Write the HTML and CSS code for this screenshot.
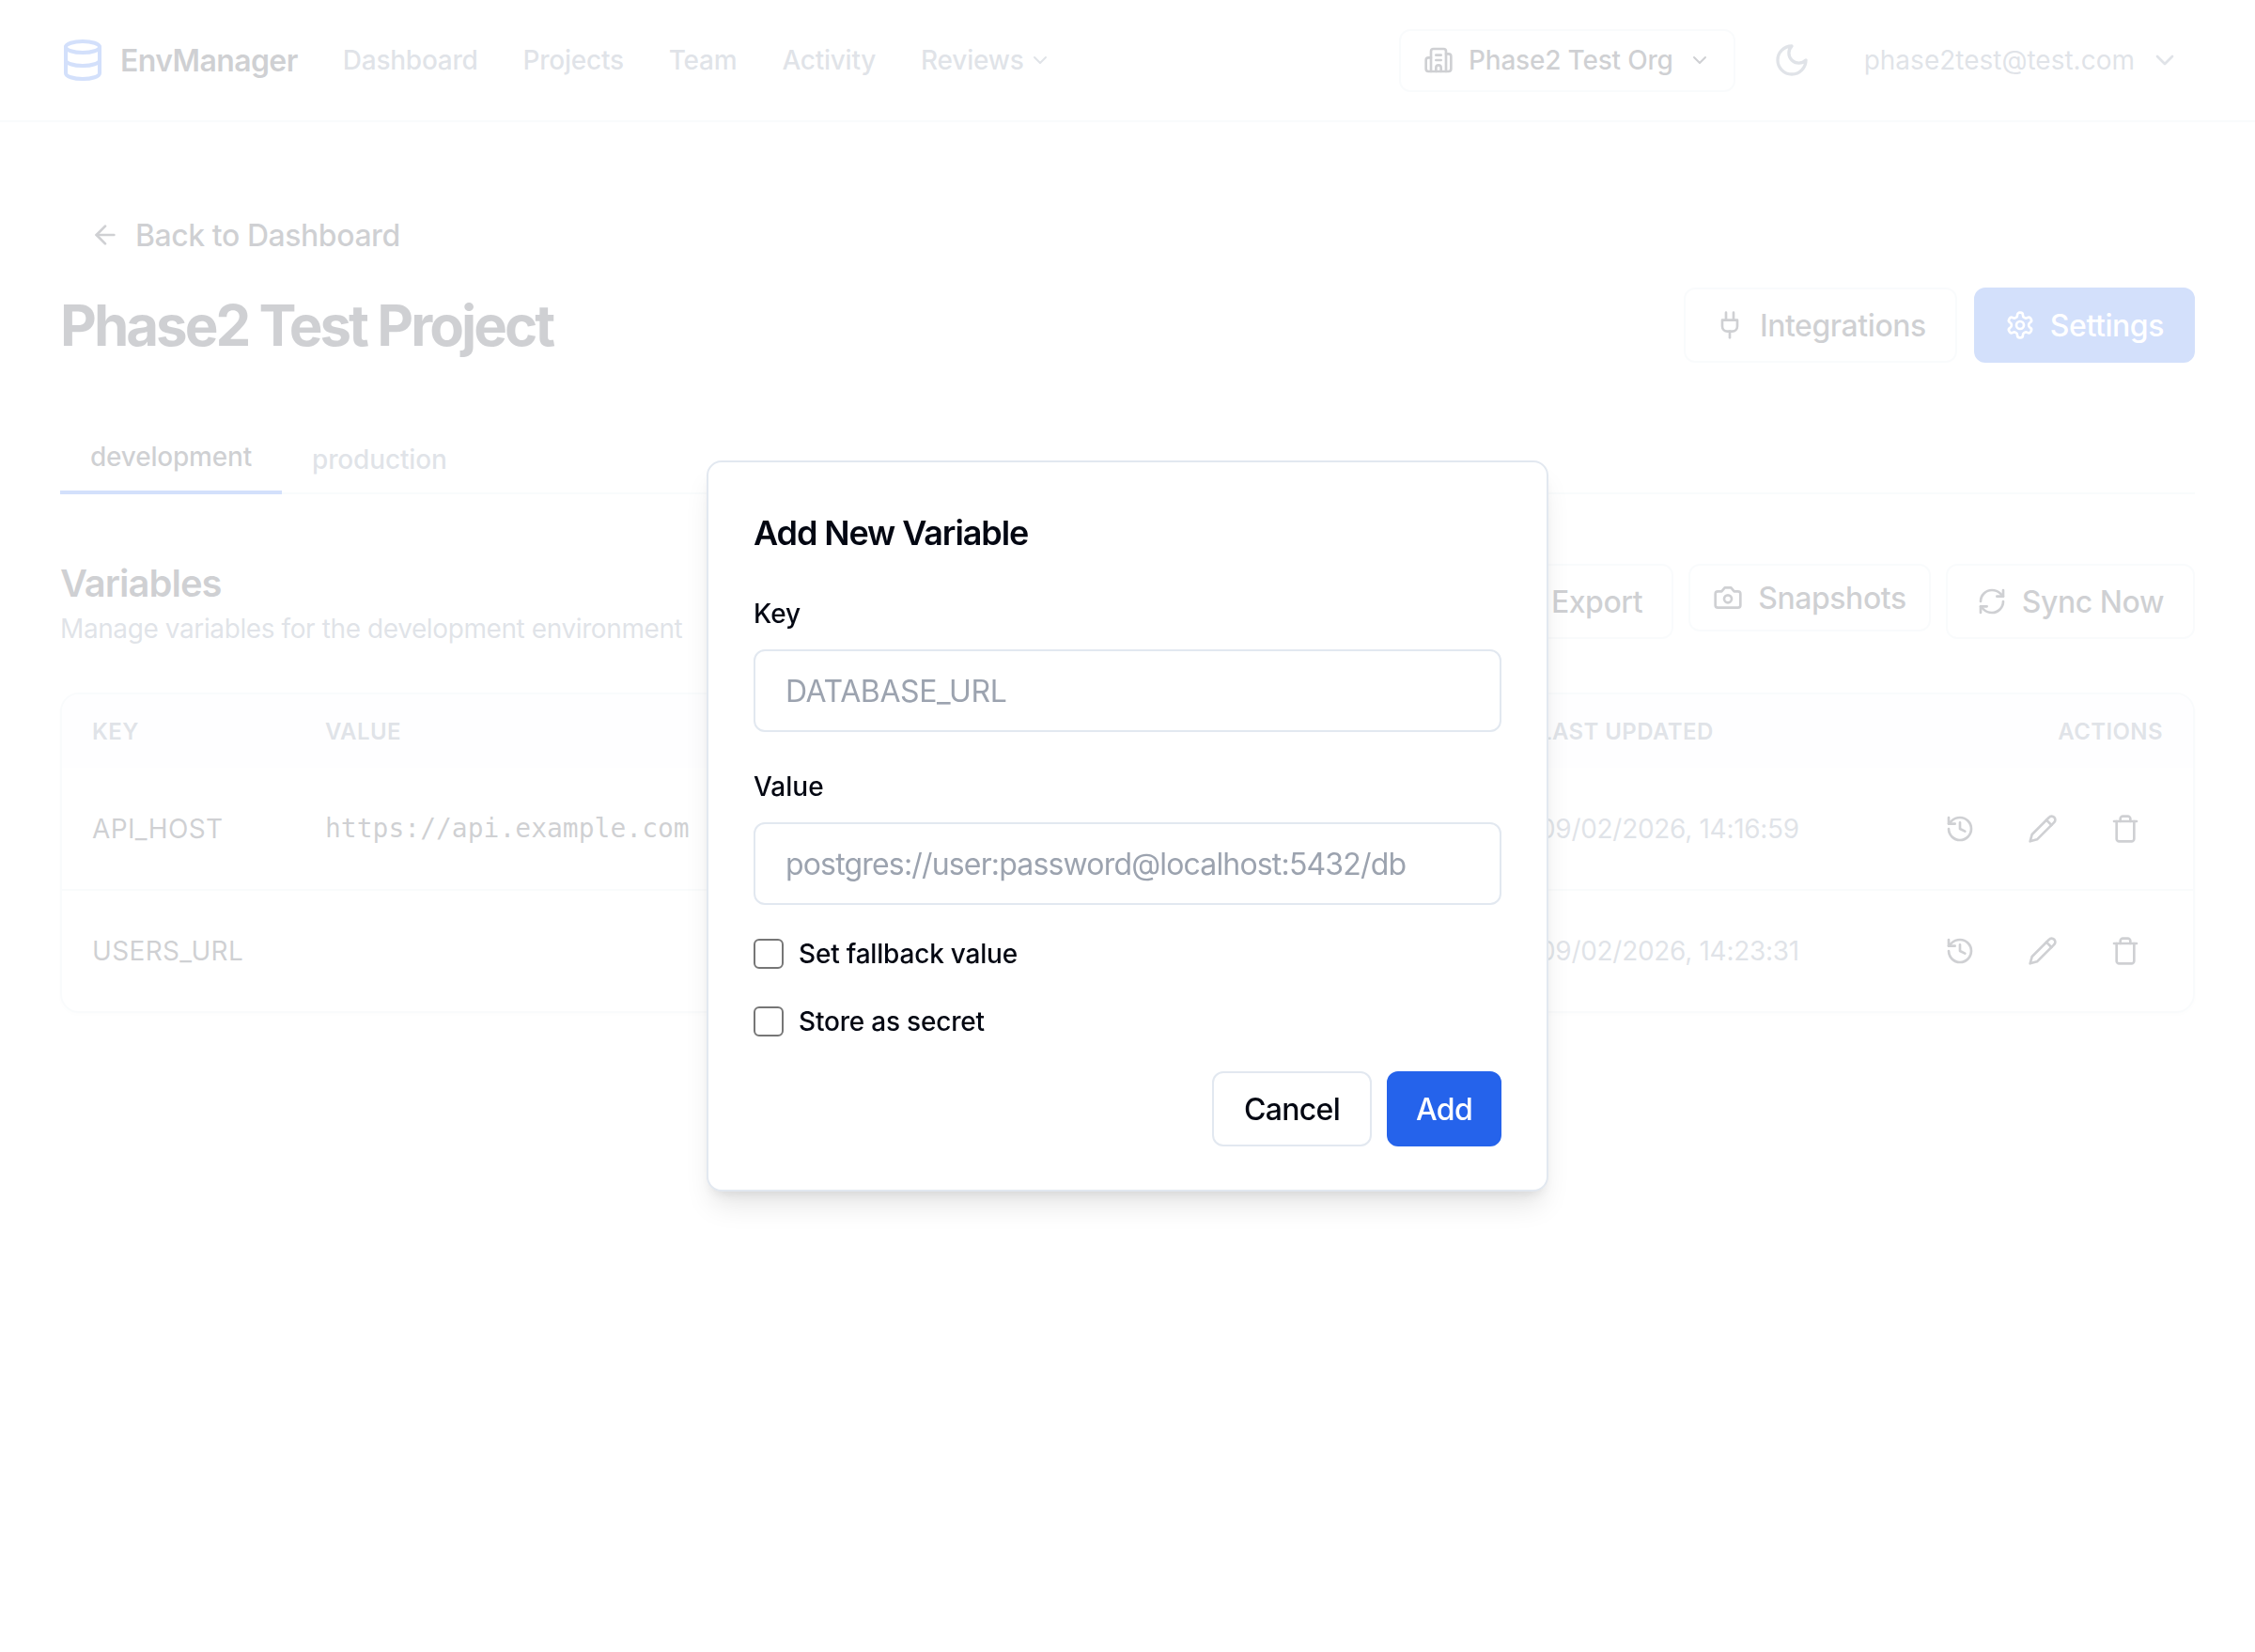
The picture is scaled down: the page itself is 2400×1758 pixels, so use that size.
FILE: index.html
```html
<!DOCTYPE html>
<html lang="en">
<head>
    <meta charset="UTF-8">
    <title>Phase2 Test Project - EnvManager</title>
    <link rel="stylesheet" href="styles.css">
</head>
<body>
    <svg class="sprite" xmlns="http://www.w3.org/2000/svg">
        <symbol id="i-database" viewBox="0 0 24 24"><ellipse cx="12" cy="5" rx="9" ry="3"/><path d="M3 5V19A9 3 0 0 0 21 19V5"/><path d="M3 12A9 3 0 0 0 21 12"/></symbol>
        <symbol id="i-chevron" viewBox="0 0 24 24"><path d="m6 9 6 6 6-6"/></symbol>
        <symbol id="i-building" viewBox="0 0 24 24"><path d="M10 12h4"/><path d="M10 8h4"/><path d="M14 21v-3a2 2 0 0 0-4 0v3"/><path d="M6 10H4a2 2 0 0 0-2 2v7a2 2 0 0 0 2 2h16a2 2 0 0 0 2-2V9a2 2 0 0 0-2-2h-2"/><path d="M6 21V5a2 2 0 0 1 2-2h8a2 2 0 0 1 2 2v16"/></symbol>
        <symbol id="i-moon" viewBox="0 0 24 24"><path d="M12 3a6 6 0 0 0 9 9 9 9 0 1 1-9-9Z"/></symbol>
        <symbol id="i-arrow-left" viewBox="0 0 24 24"><path d="m12 19-7-7 7-7"/><path d="M19 12H5"/></symbol>
        <symbol id="i-plug" viewBox="0 0 24 24"><path d="M12 22v-5"/><path d="M9 8V2"/><path d="M15 8V2"/><path d="M18 8v5a4 4 0 0 1-4 4h-4a4 4 0 0 1-4-4V8Z"/></symbol>
        <symbol id="i-settings" viewBox="0 0 24 24"><path d="M12.22 2h-.44a2 2 0 0 0-2 2v.18a2 2 0 0 1-1 1.73l-.43.25a2 2 0 0 1-2 0l-.15-.08a2 2 0 0 0-2.73.73l-.22.38a2 2 0 0 0 .73 2.73l.15.1a2 2 0 0 1 1 1.72v.51a2 2 0 0 1-1 1.74l-.15.09a2 2 0 0 0-.73 2.73l.22.38a2 2 0 0 0 2.73.73l.15-.08a2 2 0 0 1 2 0l.43.25a2 2 0 0 1 1 1.73V20a2 2 0 0 0 2 2h.44a2 2 0 0 0 2-2v-.18a2 2 0 0 1 1-1.73l.43-.25a2 2 0 0 1 2 0l.15.08a2 2 0 0 0 2.73-.73l.22-.39a2 2 0 0 0-.73-2.73l-.15-.08a2 2 0 0 1-1-1.74v-.5a2 2 0 0 1 1-1.74l.15-.09a2 2 0 0 0 .73-2.73l-.22-.38a2 2 0 0 0-2.73-.73l-.15.08a2 2 0 0 1-2 0l-.43-.25a2 2 0 0 1-1-1.73V4a2 2 0 0 0-2-2z"/><circle cx="12" cy="12" r="3"/></symbol>
        <symbol id="i-download" viewBox="0 0 24 24"><path d="M21 15v4a2 2 0 0 1-2 2H5a2 2 0 0 1-2-2v-4"/><path d="m7 10 5 5 5-5"/><path d="M12 15V3"/></symbol>
        <symbol id="i-camera" viewBox="0 0 24 24"><path d="M14.5 4h-5L7 7H4a2 2 0 0 0-2 2v9a2 2 0 0 0 2 2h16a2 2 0 0 0 2-2V9a2 2 0 0 0-2-2h-3l-2.5-3z"/><circle cx="12" cy="13" r="3"/></symbol>
        <symbol id="i-refresh" viewBox="0 0 24 24"><path d="M3 12a9 9 0 0 1 9-9 9.75 9.75 0 0 1 6.74 2.74L21 8"/><path d="M21 3v5h-5"/><path d="M21 12a9 9 0 0 1-9 9 9.75 9.75 0 0 1-6.74-2.74L3 16"/><path d="M8 16H3v5"/></symbol>
        <symbol id="i-history" viewBox="0 0 24 24"><path d="M3 12a9 9 0 1 0 9-9 9.75 9.75 0 0 0-6.74 2.74L3 8"/><path d="M3 3v5h5"/><path d="M12 7v5l4 2"/></symbol>
        <symbol id="i-pencil" viewBox="0 0 24 24"><path d="M17 3a2.85 2.83 0 1 1 4 4L7.5 20.5 2 22l1.5-5.5Z"/><path d="m15 5 4 4"/></symbol>
        <symbol id="i-trash" viewBox="0 0 24 24"><path d="M3 6h18"/><path d="M19 6v14c0 1-1 2-2 2H7c-1 0-2-1-2-2V6"/><path d="M8 6V4c0-1 1-2 2-2h4c1 0 2 1 2 2v2"/></symbol>
    </svg>

    <header class="header">
        <div class="header-left">
            <a class="logo" href="#">
                <svg class="icon icon-48 logo-icon"><use href="#i-database"/></svg>
                <span>EnvManager</span>
            </a>
            <nav class="nav-list">
                <a href="#">Dashboard</a>
                <a href="#">Projects</a>
                <a href="#">Team</a>
                <a href="#">Activity</a>
                <a class="nav-menu" href="#">Reviews <svg class="icon icon-24"><use href="#i-chevron"/></svg></a>
            </nav>
        </div>
        <div class="header-right">
            <button class="org-button">
                <svg class="icon icon-32"><use href="#i-building"/></svg>
                <span>Phase2 Test Org</span>
                <svg class="icon icon-24"><use href="#i-chevron"/></svg>
            </button>
            <button class="theme-button"><svg class="icon icon-40"><use href="#i-moon"/></svg></button>
            <button class="user-button">
                <span>phase2test@test.com</span>
                <svg class="icon icon-32"><use href="#i-chevron"/></svg>
            </button>
        </div>
    </header>

    <main class="main">
        <a class="back-link" href="#">
            <svg class="icon icon-32"><use href="#i-arrow-left"/></svg>
            <span>Back to Dashboard</span>
        </a>

        <div class="title-row">
            <h1 class="page-title">Phase2 Test Project</h1>
            <div class="button-row button-row-wide">
                <button class="btn"><svg class="icon icon-32"><use href="#i-plug"/></svg>Integrations</button>
                <button class="btn btn-primary"><svg class="icon icon-32"><use href="#i-settings"/></svg>Settings</button>
            </div>
        </div>

        <div class="tabs">
            <button class="tab tab-active">development</button>
            <button class="tab">production</button>
        </div>

        <section class="variables">
            <div class="variables-head">
                <div>
                    <h2 class="section-title">Variables</h2>
                    <p class="section-sub">Manage variables for the development environment</p>
                </div>
                <div class="button-row button-row-top">
                    <button class="btn"><svg class="icon icon-32"><use href="#i-download"/></svg>Export</button>
                    <button class="btn btn-small"><svg class="icon icon-32"><use href="#i-camera"/></svg>Snapshots</button>
                    <button class="btn"><svg class="icon icon-32"><use href="#i-refresh"/></svg>Sync Now</button>
                </div>
            </div>

            <div class="card">
                <table class="var-table">
                    <colgroup>
                        <col class="col-key">
                        <col class="col-value">
                        <col class="col-updated">
                        <col>
                    </colgroup>
                    <thead>
                        <tr>
                            <th>Key</th>
                            <th>Value</th>
                            <th>Last Updated</th>
                            <th class="th-actions">Actions</th>
                        </tr>
                    </thead>
                    <tbody>
                        <tr>
                            <td class="cell-key">API_HOST</td>
                            <td class="cell-mono">https://api.example.com</td>
                            <td class="cell-date">09/02/2026, 14:16:59</td>
                            <td>
                                <div class="row-actions">
                                    <button class="icon-button"><svg class="icon icon-32"><use href="#i-history"/></svg></button>
                                    <button class="icon-button"><svg class="icon icon-32"><use href="#i-pencil"/></svg></button>
                                    <button class="icon-button"><svg class="icon icon-32"><use href="#i-trash"/></svg></button>
                                </div>
                            </td>
                        </tr>
                        <tr>
                            <td class="cell-key">USERS_URL</td>
                            <td class="cell-mono"></td>
                            <td class="cell-date">09/02/2026, 14:23:31</td>
                            <td>
                                <div class="row-actions">
                                    <button class="icon-button"><svg class="icon icon-32"><use href="#i-history"/></svg></button>
                                    <button class="icon-button"><svg class="icon icon-32"><use href="#i-pencil"/></svg></button>
                                    <button class="icon-button"><svg class="icon icon-32"><use href="#i-trash"/></svg></button>
                                </div>
                            </td>
                        </tr>
                    </tbody>
                </table>
            </div>
        </section>
    </main>

    <div class="overlay">
        <form class="modal">
            <h3 class="modal-title">Add New Variable</h3>
            <label class="field">
                <span class="field-label">Key</span>
                <input class="input input-key" type="text" placeholder="DATABASE_URL">
            </label>
            <label class="field field-last">
                <span class="field-label">Value</span>
                <input class="input input-value" type="text" placeholder="postgres://user:password@localhost:5432/db">
            </label>
            <label class="check">
                <input type="checkbox">
                <span>Set fallback value</span>
            </label>
            <label class="check">
                <input type="checkbox">
                <span>Store as secret</span>
            </label>
            <div class="modal-actions">
                <button class="modal-btn" type="button">Cancel</button>
                <button class="modal-btn modal-btn-primary" type="button">Add</button>
            </div>
        </form>
    </div>
</body>
</html>
```

FILE: styles.css
```css
* {
    margin: 0;
    padding: 0;
    box-sizing: border-box;
}

body {
    font-family: Inter, "Liberation Sans", sans-serif;
    background-color: #fff;
    color: #111827;
    height: 1758px;
    overflow: hidden;
}

a {
    color: inherit;
    text-decoration: none;
}

button {
    font-family: inherit;
    color: inherit;
    background: none;
    border: 0;
}

.sprite {
    display: none;
}

.icon {
    fill: none;
    stroke: currentColor;
    stroke-width: 2;
    stroke-linecap: round;
    stroke-linejoin: round;
    flex-shrink: 0;
}

.icon-24 { width: 24px; height: 24px; }
.icon-32 { width: 32px; height: 32px; }
.icon-40 { width: 40px; height: 40px; }
.icon-48 { width: 48px; height: 48px; }

/* header */
.header {
    height: 130px;
    padding: 0 64px;
    border-bottom: 2px solid #e2e8f0;
    display: flex;
    justify-content: space-between;
    align-items: center;
}

.header-left,
.header-right,
.nav-list,
.logo {
    display: flex;
    align-items: center;
}

.header-left,
.nav-list {
    gap: 48px;
}

.logo {
    gap: 16px;
    font-size: 32px;
    font-weight: 600;
    letter-spacing: -0.6px;
}

.logo-icon {
    color: #2563eb;
}

.nav-list a {
    font-size: 28px;
    font-weight: 500;
    letter-spacing: -0.25px;
    color: #64748b;
}

.nav-menu {
    display: flex;
    align-items: center;
    gap: 6px;
}

.header-right {
    gap: 20px;
}

.org-button {
    height: 67px;
    padding: 0 24px;
    border: 2px solid #e2e8f0;
    border-radius: 12px;
    display: flex;
    align-items: center;
    gap: 16px;
    font-size: 28px;
    font-weight: 500;
    letter-spacing: -0.2px;
}

.theme-button {
    width: 80px;
    height: 80px;
    margin-right: 1px;
    color: #64748b;
    display: flex;
    align-items: center;
    justify-content: center;
}

.user-button {
    padding: 0 16px;
    display: flex;
    align-items: center;
    gap: 16px;
    font-size: 28px;
    color: #64748b;
}

/* page */
.main {
    padding: 80px 64px 0;
}

.back-link {
    height: 80px;
    padding: 0 32px;
    display: inline-flex;
    align-items: center;
    gap: 16px;
    font-size: 32px;
    font-weight: 500;
    letter-spacing: -0.45px;
    vertical-align: top;
}

.title-row {
    margin-top: 16px;
    display: flex;
    justify-content: space-between;
    align-items: center;
}

.page-title {
    font-size: 60px;
    font-weight: 700;
    letter-spacing: -3px;
}

.button-row {
    display: flex;
    gap: 16px;
}

.button-row-wide {
    gap: 18px;
}

.button-row-top {
    align-items: flex-start;
    margin-top: 2px;
}

.btn {
    height: 80px;
    padding: 0 31px;
    border: 2px solid #e2e8f0;
    border-radius: 12px;
    display: flex;
    align-items: center;
    gap: 16px;
    font-size: 32px;
    font-weight: 500;
    letter-spacing: -0.45px;
    background-color: #fff;
}

.btn-small {
    height: 72px;
    padding: 0 24px;
}

.btn-primary {
    background-color: #2563eb;
    border-color: #2563eb;
    color: #fff;
}

/* tabs */
.tabs {
    margin-top: 48px;
    height: 92px;
    border-bottom: 2px solid #e2e8f0;
    display: flex;
    align-items: flex-end;
}

.tab {
    margin-bottom: -2px;
    padding: 0 32px 17px;
    font-size: 28px;
    line-height: 40px;
    font-weight: 500;
    letter-spacing: -0.15px;
    color: #64748b;
}

.tab-active {
    padding-bottom: 16px;
    border-bottom: 4px solid #2563eb;
    letter-spacing: -0.2px;
    color: #111827;
}

/* variables section */
.variables {
    margin-top: 72px;
}

.variables-head {
    display: flex;
    justify-content: space-between;
    align-items: flex-start;
    margin-bottom: 48px;
}

.section-title {
    font-size: 40px;
    line-height: 46px;
    font-weight: 600;
    letter-spacing: -1px;
}

.section-sub {
    margin-top: 5px;
    font-size: 28px;
    line-height: 40px;
    letter-spacing: -0.4px;
    color: #64748b;
}

.card {
    border: 2px solid #e2e8f0;
    border-radius: 20px;
    box-shadow: 0 2px 4px rgba(0, 0, 0, 0.05);
    overflow: hidden;
}

.var-table {
    width: 100%;
    border-collapse: collapse;
    table-layout: fixed;
}

.col-key { width: 248px; }
.col-value { width: 1292px; }
.col-updated { width: 400px; }

.var-table th {
    height: 78px;
    padding: 0 32px;
    background-color: #f8fafc;
    font-size: 24px;
    font-weight: 600;
    letter-spacing: 0.4px;
    text-transform: uppercase;
    text-align: left;
    color: #64748b;
}

.var-table th.th-actions {
    text-align: right;
}

.var-table td {
    height: 130px;
    padding: 0 32px;
    font-size: 28px;
    white-space: nowrap;
}

.var-table tbody tr:first-child td {
    border-bottom: 2px solid #e2e8f0;
}

.var-table tbody tr:last-child td {
    height: 129px;
}

.var-table td.cell-key {
    letter-spacing: 0.35px;
}

.var-table td.cell-mono {
    font-family: "DejaVu Sans Mono", "Liberation Mono", monospace;
    font-size: 28px;
}

.var-table td.cell-date {
    letter-spacing: -0.3px;
    color: #64748b;
}

.row-actions {
    display: flex;
    justify-content: flex-end;
    gap: 8px;
}

.icon-button {
    width: 80px;
    height: 80px;
    display: flex;
    align-items: center;
    justify-content: center;
}

/* modal */
.overlay {
    position: fixed;
    top: 0;
    left: 0;
    right: 0;
    bottom: 0;
    background-color: rgba(255, 255, 255, 0.8);
    display: flex;
    align-items: center;
    justify-content: center;
}

.modal {
    width: 896px;
    padding: 48px 48px 46px;
    background-color: #fff;
    border: 2px solid #e2e8f0;
    border-radius: 16px;
    box-shadow: 0 20px 30px -6px rgba(0, 0, 0, 0.1), 0 8px 12px -6px rgba(0, 0, 0, 0.1);
    color: #030712;
}

.modal-title {
    font-size: 36px;
    line-height: 54px;
    font-weight: 600;
    letter-spacing: -1.1px;
    margin-bottom: 39px;
}

.field {
    display: block;
    margin-bottom: 38px;
}

.field-last {
    margin-bottom: 36px;
}

.field-label {
    display: block;
    font-size: 28px;
    line-height: 40px;
    font-weight: 500;
    margin-bottom: 18px;
}

.input {
    display: block;
    width: 100%;
    height: 88px;
    padding: 0 32px;
    border: 2px solid #e2e8f0;
    border-radius: 12px;
    font-family: inherit;
    font-size: 32px;
    color: #030712;
    background-color: #fff;
    outline: none;
}

.input::placeholder {
    color: #9ca3af;
}

.input-key {
    letter-spacing: -0.38px;
}

.input-value {
    letter-spacing: -0.83px;
}

.check {
    display: flex;
    align-items: center;
    gap: 16px;
    height: 32px;
    font-size: 28px;
    font-weight: 500;
    letter-spacing: -0.2px;
    margin-bottom: 40px;
}

.check input {
    appearance: none;
    width: 32px;
    height: 32px;
    border: 2px solid #767676;
    border-radius: 6px;
    background-color: #fff;
}

.modal-actions {
    display: flex;
    justify-content: flex-end;
    gap: 16px;
    margin-top: -3px;
}

.modal-btn {
    height: 80px;
    padding: 0 32px;
    border: 2px solid #e2e8f0;
    border-radius: 12px;
    font-size: 32px;
    font-weight: 500;
    letter-spacing: -0.7px;
    background-color: #fff;
    color: #030712;
}

.modal-btn-primary {
    padding: 0 29px;
    background-color: #2563eb;
    border-color: #2563eb;
    color: #fff;
}
```
